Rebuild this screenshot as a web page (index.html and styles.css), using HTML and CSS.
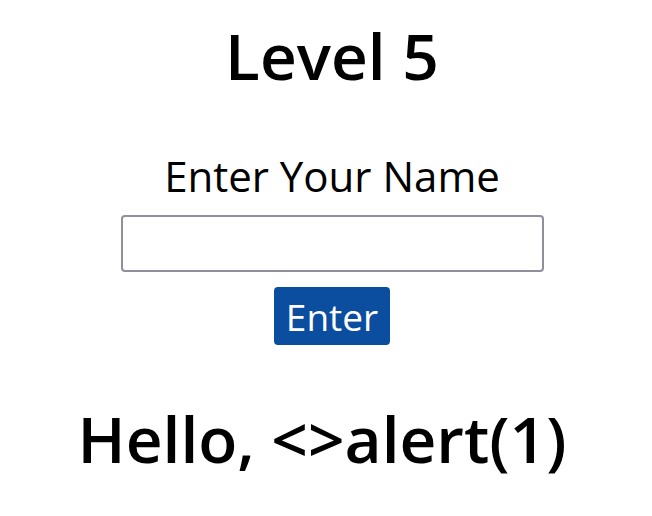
FILE: index.html
```html
<!DOCTYPE html>
<html>
<head>
<meta charset="utf-8">
<link rel="stylesheet" href="styles.css">
</head>
<body>
<main class="page">
  <h1 class="title">Level 5</h1>
  <form class="form">
    <label class="label" for="name">Enter Your Name</label>
    <input class="field" id="name" type="text">
    <button class="btn" type="button">Enter</button>
  </form>
  <h1 class="greeting">Hello, &lt;&gt;alert(1)</h1>
</main>
</body>
</html>
```
FILE: styles.css
```css
html, body {
  margin: 0;
  padding: 0;
  background: #ffffff;
}
body {
  font-family: "Open Sans", "Noto Sans", sans-serif;
  color: #000;
}
.page {
  display: flex;
  flex-direction: column;
  align-items: center;
  padding-left: 12px;
}
.title {
  margin: 12px 0 0;
  font-size: 64px;
  font-weight: 600;
  line-height: 88px;
}
.form {
  display: flex;
  flex-direction: column;
  align-items: center;
  margin-top: 48px;
}
.label {
  font-size: 42px;
  line-height: 52px;
  margin-top: 2px;
}
.field {
  box-sizing: border-box;
  width: 423px;
  height: 57px;
  margin-top: 13px;
  border: 2px solid #8f8f9d;
  border-radius: 4px;
  background: #fff;
}
.btn {
  box-sizing: border-box;
  height: 58px;
  margin-top: 15px;
  padding: 0 12px;
  background: #0b4d9f;
  color: #fff;
  border: none;
  border-radius: 4px;
  font-family: "Open Sans", sans-serif;
  font-size: 37px;
}
.greeting {
  margin: 50px 0 0;
  padding-right: 20px;
  font-size: 64px;
  font-weight: 600;
  line-height: 88px;
}
```
